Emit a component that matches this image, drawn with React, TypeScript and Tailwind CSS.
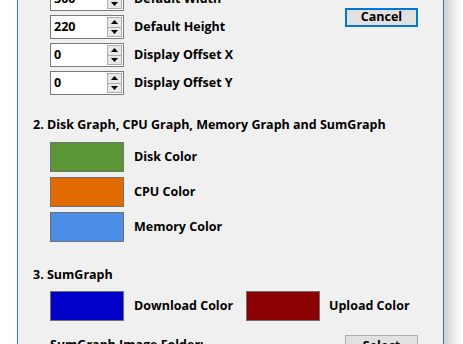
import type { ReactNode } from "react";

type SpinnerRowProps = {
  value: string;
  label: string;
};

function SpinArrow({ up }: { up?: boolean }) {
  return (
    <svg width="7" height="4" viewBox="0 0 7 4" className="block">
      {up ? <path d="M0 4 L3.5 0 L7 4 Z" fill="#000" /> : <path d="M0 0 L7 0 L3.5 4 Z" fill="#000" />}
    </svg>
  );
}

function SpinnerRow({ value, label }: SpinnerRowProps) {
  return (
    <div className="flex items-center">
      <div className="flex h-[24px] w-[74px] items-stretch border border-[#7a7a7a] bg-white p-[1px]">
        <div className="flex flex-1 items-center pl-[2px] text-[12.5px] font-bold leading-none text-black">
          {value}
        </div>
        <div className="flex w-[15px] flex-col border border-[#adadad] bg-[#e8e8e8]">
          <div className="flex flex-1 items-center justify-center border-b border-[#adadad]">
            <SpinArrow up />
          </div>
          <div className="flex flex-1 items-center justify-center">
            <SpinArrow />
          </div>
        </div>
      </div>
      <span className="ml-[10px] text-[12.5px] font-bold leading-none text-black">{label}</span>
    </div>
  );
}

function Swatch({ color }: { color: string }) {
  return <div className={`h-[30px] w-[74px] shrink-0 border border-[#707070] ${color}`} />;
}

function SwatchRow({ color, label }: { color: string; label: string }) {
  return (
    <div className="flex items-center">
      <Swatch color={color} />
      <span className="ml-[10px] text-[12.5px] font-bold text-black">{label}</span>
    </div>
  );
}

function Heading({ children }: { children: ReactNode }) {
  return <div className="pl-[15px] text-[12.5px] font-bold leading-[16px] text-black">{children}</div>;
}

export default function App() {
  return (
    <div className="flex h-[344px] w-[463px] overflow-hidden bg-white font-['Open_Sans',sans-serif]">
      <div className="ml-[17px] w-[427px] shrink-0 border-x border-[#2b79d0] bg-[#f0f0f0]">
        {/* 1. size & offsets */}
        <div className="-mt-[13px] flex pl-[32px]">
          <div className="flex flex-col gap-[4px]">
            <SpinnerRow value="300" label="Default Width" />
            <SpinnerRow value="220" label="Default Height" />
            <SpinnerRow value="0" label="Display Offset X" />
            <SpinnerRow value="0" label="Display Offset Y" />
          </div>
          <button
            type="button"
            className="ml-auto mr-[25px] mt-[21px] flex h-[19px] w-[73px] items-center justify-center border-2 border-[#0078d7] bg-[#e1e1e1] text-[12.5px] font-bold leading-none text-black"
          >
            Cancel
          </button>
        </div>

        {/* 2. colours */}
        <div className="mt-[22px]">
          <Heading>2. Disk Graph, CPU Graph, Memory Graph and SumGraph</Heading>
          <div className="mt-[9px] flex flex-col gap-[5px] pl-[32px]">
            <SwatchRow color="bg-[#5a9634]" label="Disk Color" />
            <SwatchRow color="bg-[#e06c00]" label="CPU Color" />
            <SwatchRow color="bg-[#4a8ee8]" label="Memory Color" />
          </div>
        </div>

        {/* 3. sumgraph */}
        <div className="mt-[25px]">
          <Heading>3. SumGraph</Heading>
          <div className="mt-[8px] flex items-center pl-[32px]">
            <Swatch color="bg-[#0000c8]" />
            <span className="ml-[10px] w-[112px] text-[12.5px] font-bold text-black">Download Color</span>
            <Swatch color="bg-[#8b0000]" />
            <span className="ml-[9px] text-[12.5px] font-bold text-black">Upload Color</span>
          </div>
          <div className="mt-[14px] flex items-start pl-[32px] pr-[25px]">
            <span className="mt-[2px] text-[12.5px] font-bold leading-[16px] text-black">SumGraph Image Folder:</span>
            <button
              type="button"
              className="ml-auto flex h-[23px] w-[73px] items-center justify-center border border-[#adadad] bg-[#e1e1e1] text-[12.5px] font-bold leading-none text-black"
            >
              Select
            </button>
          </div>
        </div>
      </div>
      <div className="w-[19px] shrink-0 bg-gradient-to-r from-[#cfcfcf] via-[#ececec] to-white" />
    </div>
  );
}
